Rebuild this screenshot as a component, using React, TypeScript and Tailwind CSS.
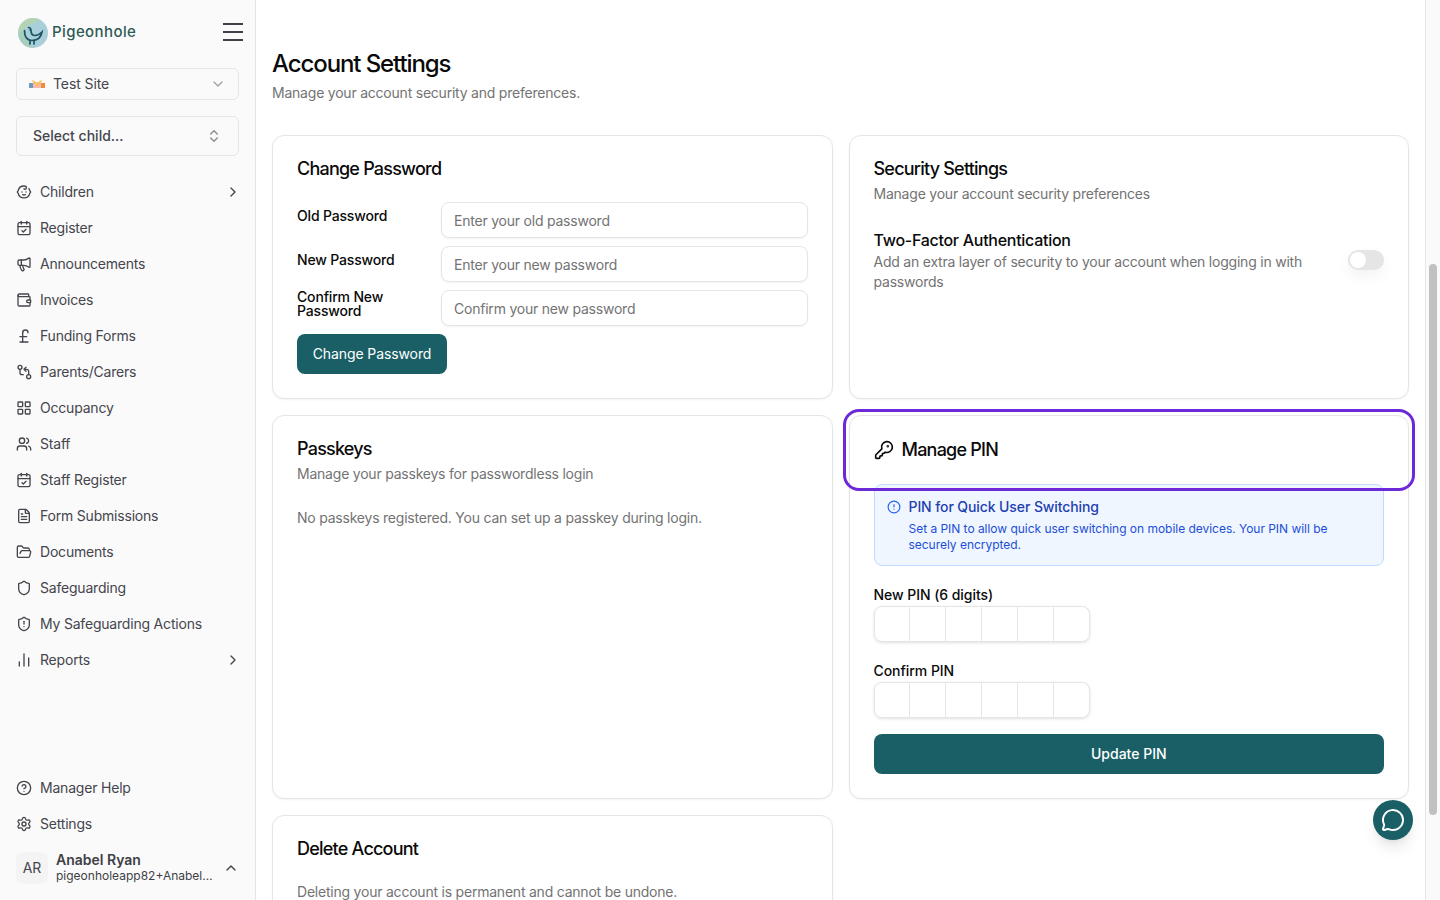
import React from "react";
import {
  Baby, CalendarCheck, Megaphone, Wallet, PoundSterling, LayoutGrid, Users, FileText, FolderOpen,
  Shield, ShieldAlert, ChartNoAxesColumn, CircleHelp, Settings, ChevronUp, ChevronDown, ChevronRight,
  ChevronsUpDown, KeyRound, CircleAlert, MessageCircle,
} from "lucide-react";

function RouteIcon({ className }: { className?: string }) {
  return (
    <svg className={className} width="16" height="16" viewBox="0 0 24 24" fill="none" stroke="currentColor" strokeWidth="2" strokeLinecap="round" strokeLinejoin="round">
      <circle cx="6" cy="5" r="3" />
      <circle cx="19" cy="19" r="3" />
      <path d="M6 8v5a3 3 0 0 0 3 3h2" />
      <path d="M19 16v-5a3 3 0 0 0-3-3h-3" />
      <path d="M15 5l-3 3 3 3" />
    </svg>
  );
}

const navItems: { label: string; Icon: React.ComponentType<{ className?: string; size?: number }>; chevron?: boolean }[] = [
  { label: "Children", Icon: Baby, chevron: true },
  { label: "Register", Icon: CalendarCheck },
  { label: "Announcements", Icon: Megaphone },
  { label: "Invoices", Icon: Wallet },
  { label: "Funding Forms", Icon: PoundSterling },
  { label: "Parents/Carers", Icon: RouteIcon },
  { label: "Occupancy", Icon: LayoutGrid },
  { label: "Staff", Icon: Users },
  { label: "Staff Register", Icon: CalendarCheck },
  { label: "Form Submissions", Icon: FileText },
  { label: "Documents", Icon: FolderOpen },
  { label: "Safeguarding", Icon: Shield },
  { label: "My Safeguarding Actions", Icon: ShieldAlert },
  { label: "Reports", Icon: ChartNoAxesColumn, chevron: true },
];

function NavRow({ label, Icon, chevron }: { label: string; Icon: React.ComponentType<{ className?: string; size?: number }>; chevron?: boolean }) {
  return (
    <div className="flex h-9 items-center gap-2 text-sm tracking-[-0.2px] text-[#45454d]">
      <Icon size={16} className="shrink-0" />
      <span className="flex-1">{label}</span>
      {chevron && <ChevronRight size={16} className="mr-[-2px] shrink-0" />}
    </div>
  );
}

function Logo() {
  return (
    <svg width="30" height="30" viewBox="0 0 30 30" fill="none">
      <circle cx="15" cy="15" r="15" fill="#a9cfda" />
      <path d="M0 15A15 15 0 0 1 15 0c2 0 4 .4 5.5 1C19 5 14 5 11 7 8 9 6 12 0 15z" fill="#b5d3b2" />
      <path d="M16 30C8 30 2 26 0 15c3-1 6-3 7-3 1 6 2 11 9 18z" fill="#a8cfbe" />
      <path d="M6.5 12.5c0 5 1.5 10 7.500 10 5 0 9-3 10-8.500-2.500 2.500-4.500 3.500-7 3.500-3 0-4-2-4-5 0-2-1-3-2.500-3" stroke="#1d5560" strokeWidth="1.7" strokeLinecap="round" />
      <path d="M12 22.500v3.500M16 22.500v3.500" stroke="#1d5560" strokeWidth="1.7" strokeLinecap="round" />
      <circle cx="12" cy="12" r="0.8" fill="#1d5560" />
    </svg>
  );
}

function SiteIcon() {
  return (
    <svg width="16" height="16" viewBox="0 0 16 16">
      <rect x="0" y="7" width="5" height="5" fill="#6f9ac0" />
      <rect x="11" y="7" width="5" height="5" fill="#f28a3c" />
      <rect x="4" y="6" width="8" height="6" fill="#f8b9b0" />
      <path d="M2.500 4.500h2.500L8 8l3-3.500h2.500L8 10.500z" fill="#f5c64f" />
    </svg>
  );
}

function Sidebar() {
  return (
    <aside className="flex h-full w-[256px] shrink-0 flex-col border-r border-[#e5e5e5] bg-[#fafafa] px-4">
      <div className="mt-4 flex h-[32px] w-[227px] items-center justify-between">
        <div className="flex items-center gap-[4px] pl-[2px] pt-[1px]">
          <Logo />
          <span className="text-[15px] font-medium tracking-[0.4px] text-[#2f5a55]">Pigeonhole</span>
        </div>
        <div className="flex w-5 flex-col gap-[6px]">
          <div className="h-[2px] bg-[#3f3f46]" />
          <div className="h-[2px] bg-[#3f3f46]" />
          <div className="h-[2px] bg-[#3f3f46]" />
        </div>
      </div>
      <div className="mt-5 flex h-8 w-[223px] items-center rounded-md border border-[#e5e5e5] pl-3 pr-3 text-sm tracking-[-0.1px] text-[#45454d]">
        <SiteIcon />
        <span className="ml-2 flex-1">Test Site</span>
        <ChevronDown size={16} className="text-[#a1a1aa]" />
      </div>
      <div className="mt-4 flex h-10 w-[223px] items-center justify-between rounded-md border border-[#e5e5e5] px-4 text-sm font-[450] text-[#45454d]">
        <span>Select child...</span>
        <ChevronsUpDown size={16} className="text-[#8a8a92]" />
      </div>
      <nav className="mt-[18px] w-[223px]">
        {navItems.map((n) => (
          <NavRow key={n.label} {...n} />
        ))}
      </nav>
      <div className="mt-auto w-[223px]">
        <NavRow label="Manager Help" Icon={CircleHelp} />
        <NavRow label="Settings" Icon={Settings} />
        <div className="mb-4 mt-[9px] flex items-center gap-2">
          <div className="flex size-8 shrink-0 items-center justify-center rounded-lg bg-[#f4f4f5] text-sm text-[#45454d]">AR</div>
          <div className="min-w-0 flex-1 pr-[2px]">
            <div className="truncate text-sm leading-[17px] font-semibold text-[#3f3f46]">Anabel Ryan</div>
            <div className="truncate text-xs leading-[16px] text-[#3f3f46]">pigeonholeapp82+Anabel.Ryan@gmail.com</div>
          </div>
          <ChevronUp size={16} className="shrink-0 text-[#3f3f46]" />
        </div>
      </div>
    </aside>
  );
}

function Card({ children, className = "" }: { children: React.ReactNode; className?: string }) {
  return <section className={`rounded-xl border border-[#e5e5e5] bg-white p-6 shadow-xs ${className}`}>{children}</section>;
}

function CardTitle({ children }: { children: React.ReactNode }) {
  return <h2 className="text-lg leading-[18px] font-[550] tracking-[-0.78px] text-[#0a0a0a]">{children}</h2>;
}

function CardDesc({ children }: { children: React.ReactNode }) {
  return <p className="mt-[6px] text-sm tracking-[-0.22px] text-[#737373]">{children}</p>;
}

function PwRow({ label, placeholder }: { label: string; placeholder: string }) {
  return (
    <div className="flex items-center">
      <label className="mb-2 w-[144px] shrink-0 pr-8 text-sm leading-[14px] font-medium tracking-[-0.17px] text-[#0a0a0a]">{label}</label>
      <input
        placeholder={placeholder}
        className="h-9 w-full min-w-0 rounded-lg border border-[#e5e5e5] bg-white px-3 text-sm tracking-[-0.22px] text-[#0a0a0a] shadow-xs outline-none placeholder:text-[#737373]"
      />
    </div>
  );
}

function PinBoxes() {
  return (
    <div className="flex w-fit rounded-lg shadow-[0_1px_3px_rgba(0,0,0,0.12)]">
      {[0, 1, 2, 3, 4, 5].map((i) => (
        <div
          key={i}
          className="size-9 border-y border-r border-[#e5e5e5] bg-white first:rounded-l-lg first:border-l last:rounded-r-lg"
        />
      ))}
    </div>
  );
}

export default function App() {
  return (
    <div className="relative flex h-[900px] w-[1440px] overflow-hidden bg-white [font-family:Inter,'Liberation_Sans',sans-serif]">
      <Sidebar />
      <main className="min-w-0 flex-1 overflow-hidden px-4 pt-12">
        <h1 className="text-2xl font-[550] tracking-[-1.1px] text-[#0a0a0a]">Account Settings</h1>
        <p className="mt-[3px] text-sm tracking-[-0.22px] text-[#737373]">Manage your account security and preferences.</p>
        <div className="mt-8 grid grid-cols-2 gap-4">
          <Card>
            <CardTitle>Change Password</CardTitle>
            <div className="mt-6 flex flex-col gap-2">
              <PwRow label="Old Password" placeholder="Enter your old password" />
              <PwRow label="New Password" placeholder="Enter your new password" />
              <PwRow label="Confirm New Password" placeholder="Confirm your new password" />
              <button className="h-10 w-[150px] rounded-lg bg-[#1a5f66] text-sm tracking-[-0.1px] text-white">Change Password</button>
            </div>
          </Card>
          <Card>
            <CardTitle>Security Settings</CardTitle>
            <CardDesc>Manage your account security preferences</CardDesc>
            <div className="mt-6 flex items-center justify-between gap-8">
              <div className="min-w-0 flex-1">
                <div className="text-base font-medium tracking-[-0.28px] text-[#0a0a0a]">Two-Factor Authentication</div>
                <div className="text-sm tracking-[-0.22px] text-[#737373]">Add an extra layer of security to your account when logging in with passwords</div>
              </div>
              <div className="flex h-5 w-9 shrink-0 items-center rounded-full bg-[#e5e5e5] p-[2px] shadow-[0_6px_14px_rgba(0,0,0,0.05)]">
                <div className="size-4 rounded-full bg-white" />
              </div>
            </div>
          </Card>
          <Card>
            <CardTitle>Passkeys</CardTitle>
            <CardDesc>Manage your passkeys for passwordless login</CardDesc>
            <p className="mt-6 text-sm tracking-[-0.22px] text-[#737373]">No passkeys registered. You can set up a passkey during login.</p>
          </Card>
          <Card>
            <div className="flex h-5 items-center gap-2">
              <KeyRound size={20} className="text-[#0a0a0a]" />
              <CardTitle>Manage PIN</CardTitle>
            </div>
            <div className="mt-6 flex gap-2 rounded-lg border border-[#bfdbfe] bg-[#eff6ff] px-3 py-3">
              <CircleAlert size={14} className="mt-[3px] shrink-0 text-[#2563eb]" />
              <div>
                <div className="text-sm font-medium tracking-[-0.1px] text-[#1e40af]">PIN for Quick User Switching</div>
                <div className="mt-1 text-xs tracking-[-0.03px] text-[#1d4ed8]">
                  Set a PIN to allow quick user switching on mobile devices. Your PIN will be securely encrypted.
                </div>
              </div>
            </div>
            <div className="mt-[22px] mb-1 text-sm leading-[14px] font-medium tracking-[-0.05px] text-[#0a0a0a]">New PIN (6 digits)</div>
            <PinBoxes />
            <div className="mt-[22px] mb-1 text-sm leading-[14px] font-medium tracking-[-0.05px] text-[#0a0a0a]">Confirm PIN</div>
            <PinBoxes />
            <button className="mt-4 h-10 w-full rounded-lg bg-[#1a5f66] text-sm font-medium text-white">Update PIN</button>
          </Card>
          <Card>
            <CardTitle>Delete Account</CardTitle>
            <p className="mt-6 text-sm tracking-[-0.22px] text-[#737373]">Deleting your account is permanent and cannot be undone.</p>
          </Card>
        </div>
      </main>
      <div className="w-[15px] shrink-0 border-l border-[#e5e5e5] bg-[#fafafa]">
        <div className="ml-[3px] mt-[264px] h-[551px] w-2 rounded-full bg-[#c1c1c1]" />
      </div>
      <div className="pointer-events-none absolute left-[843px] top-[409px] h-[82px] w-[572px] rounded-2xl border-[3px] border-[#6d28d9]" />
      <button className="absolute left-[1373px] top-[800px] flex size-10 items-center justify-center rounded-full bg-[#1a5f66] text-white shadow-lg">
        <MessageCircle size={24} strokeWidth={2} />
      </button>
    </div>
  );
}
